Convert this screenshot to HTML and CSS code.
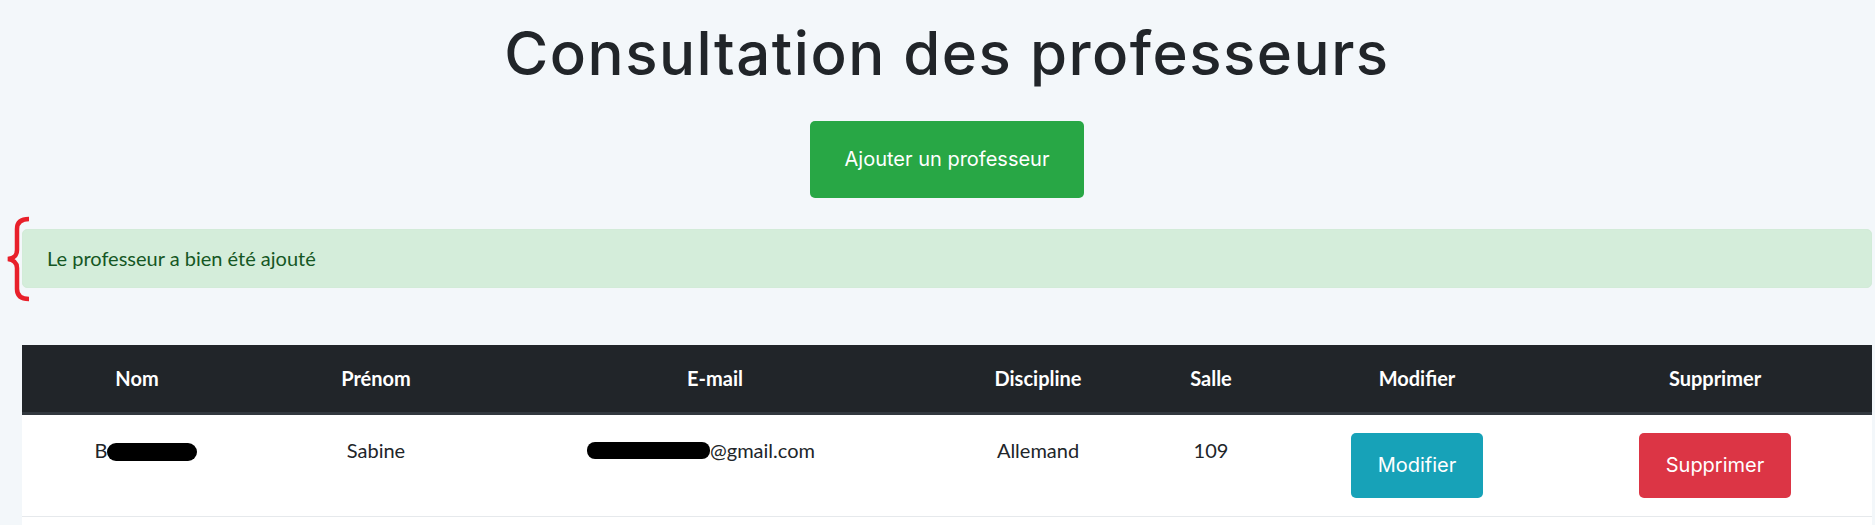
FILE: index.html
```html
<!DOCTYPE html>
<html lang="fr">
<head>
<meta charset="utf-8">
<title>Consultation des professeurs</title>
<link rel="stylesheet" href="styles.css">
</head>
<body>
<svg class="brace" width="28" height="86" viewBox="0 0 28 86" aria-hidden="true">
  <path d="M24 3 C16 3 12 6 12 13 L12 34 C12 40 9 42 3 43 C9 44 12 47 12 52 L12 73 C12 80 16 83 24 83" fill="none" stroke="#e8202a" stroke-width="4.5" stroke-linecap="butt"/>
</svg>
<main class="container">
  <h1 class="title">Consultation des professeurs</h1>
  <div class="actions">
    <a class="btn btn-success btn-big">Ajouter un professeur</a>
  </div>
  <div class="alert">Le professeur a bien été ajouté</div>
  <table class="grid">
    <colgroup>
      <col class="c1"><col class="c2"><col class="c3"><col class="c4"><col class="c5"><col class="c6"><col class="c7">
    </colgroup>
    <thead>
      <tr>
        <th>Nom</th><th>Prénom</th><th>E-mail</th><th>Discipline</th><th>Salle</th><th>Modifier</th><th>Supprimer</th>
      </tr>
    </thead>
    <tbody>
      <tr>
        <td><span class="name">B<span class="redact redact-name"></span></span></td>
        <td>Sabine</td>
        <td><span class="mail"><span class="redact redact-mail"></span>@gmail.com</span></td>
        <td>Allemand</td>
        <td>109</td>
        <td><a class="btn btn-info btn-row">Modifier</a></td>
        <td><a class="btn btn-danger btn-row">Supprimer</a></td>
      </tr>
      <tr class="blank">
        <td>&nbsp;</td><td></td><td></td><td></td><td></td><td></td><td></td>
      </tr>
    </tbody>
  </table>
</main>
</body>
</html>
```
FILE: styles.css
```css
html, body {
  margin: 0;
  padding: 0;
}
body {
  background: #f3f7fa;
  font-family: "Lato", "Liberation Sans", sans-serif;
  color: #212529;
  position: relative;
}
.container {
  padding: 0 3px 0 22px;
}
.title {
  margin: 0;
  padding-top: 18px;
  font-family: "Inter", "Liberation Sans", sans-serif;
  font-weight: 500;
  font-size: 60px;
  letter-spacing: 1.5px;
  line-height: 71px;
  text-align: center;
  color: #212529;
}
.actions {
  display: flex;
  justify-content: center;
  margin-top: 32px;
}
.btn {
  display: inline-block;
  color: #fff;
  font-family: "Inter", "Liberation Sans", sans-serif;
  font-size: 20px;
  border-radius: 5px;
  text-align: center;
  white-space: nowrap;
}
.btn-big {
  height: 77px;
  line-height: 77px;
  padding: 0 35px;
}
.btn-success { background: #28a745; }
.btn-info { background: #17a2b8; }
.btn-danger { background: #dc3545; }
.alert {
  margin-top: 31px;
  padding: 14px 24px;
  line-height: 29px;
  font-size: 20px;
  color: #155724;
  background: #d4edda;
  border: 1px solid #d2ebd8;
  border-radius: 5px;
}
.grid {
  margin-top: 57px;
  width: 100%;
  table-layout: fixed;
  border-collapse: collapse;
  background: #fff;
  font-size: 20px;
}
.c1 { width: 230px; }
.c2 { width: 248px; }
.c3 { width: 430px; }
.c4 { width: 216px; }
.c5 { width: 130px; }
.c6 { width: 282px; }
.c7 { width: 314px; }
.grid th {
  background: #212529;
  color: #fff;
  font-weight: 700;
  padding: 18px 12px;
  line-height: 31px;
  border-bottom: 3px solid #32383e;
  text-align: center;
}
.grid td {
  padding: 18px 12px;
  line-height: 34px;
  vertical-align: top;
  text-align: center;
  border-bottom: 1px solid #e6e9ec;
}
.btn-row {
  height: 65px;
  line-height: 65px;
  padding: 0 27px;
  vertical-align: top;
}
.redact {
  display: inline-block;
  background: #000;
}
.name {
  padding-left: 18px;
}
.redact-name {
  width: 90px;
  height: 18px;
  border-radius: 9px;
  vertical-align: -3px;
}
.redact-mail {
  width: 123px;
  height: 17px;
  border-radius: 8px;
  vertical-align: -1px;
}
.mail {
  padding-right: 28px;
}
.brace {
  position: absolute;
  left: 5px;
  top: 216px;
}
```
